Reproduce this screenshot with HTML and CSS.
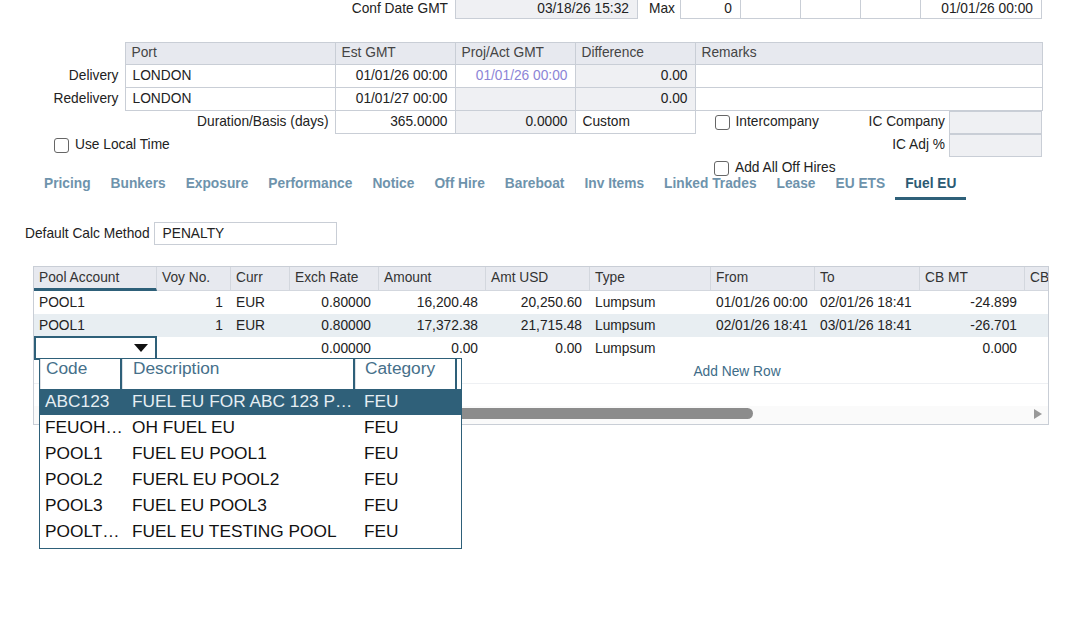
FILE: index.html
```html
<!DOCTYPE html>
<html lang="en">
<head>
    <meta charset="UTF-8">
    <meta name="viewport" content="width=device-width, initial-scale=1.0">
    <title>Fuel EU</title>
    <link rel="stylesheet" href="styles.css">
</head>
<body>
    <div class="top-row">
        <span class="top-label">Conf Date GMT</span>
        <span class="fld gray num w182">03/18/26 15:32</span>
        <span class="top-max">Max</span>
        <span class="fld num w61">0</span>
        <span class="fld w61"></span>
        <span class="fld w61"></span>
        <span class="fld w61"></span>
        <span class="fld num w122">01/01/26 00:00</span>
    </div>

    <table class="port-table">
        <colgroup>
            <col style="width:125px"><col style="width:210px"><col style="width:120px">
            <col style="width:120px"><col style="width:120px"><col style="width:347px">
        </colgroup>
        <tr class="head-row">
            <th class="lbl"></th>
            <th>Port</th>
            <th>Est GMT</th>
            <th>Proj/Act GMT</th>
            <th>Difference</th>
            <th>Remarks</th>
        </tr>
        <tr>
            <td class="lbl">Delivery</td>
            <td>LONDON</td>
            <td class="num">01/01/26 00:00</td>
            <td class="num purple">01/01/26 00:00</td>
            <td class="num gray">0.00</td>
            <td></td>
        </tr>
        <tr>
            <td class="lbl">Redelivery</td>
            <td>LONDON</td>
            <td class="num">01/01/27 00:00</td>
            <td class="gray"></td>
            <td class="num gray">0.00</td>
            <td></td>
        </tr>
        <tr>
            <td class="lbl" colspan="2">Duration/Basis (days)</td>
            <td class="num">365.0000</td>
            <td class="num gray">0.0000</td>
            <td>Custom</td>
            <td class="side">
                <div class="side-box">
                    <label class="chk"><span class="box"></span>Intercompany</label>
                    <span class="side-label">IC Company</span>
                    <span class="side-fld"></span>
                </div>
            </td>
        </tr>
        <tr>
            <td class="blank" colspan="5">
                <label class="chk local"><span class="box"></span>Use Local Time</label>
            </td>
            <td class="side">
                <div class="side-box">
                    <span class="side-label">IC Adj %</span>
                    <span class="side-fld"></span>
                </div>
            </td>
        </tr>
        <tr>
            <td class="blank" colspan="5"></td>
            <td class="side">
                <div class="side-box">
                    <label class="chk"><span class="box"></span>Add All Off Hires</label>
                </div>
            </td>
        </tr>
    </table>

    <div class="tabs">
        <span class="tab">Pricing</span>
        <span class="tab">Bunkers</span>
        <span class="tab">Exposure</span>
        <span class="tab">Performance</span>
        <span class="tab">Notice</span>
        <span class="tab">Off Hire</span>
        <span class="tab">Bareboat</span>
        <span class="tab">Inv Items</span>
        <span class="tab">Linked Trades</span>
        <span class="tab">Lease</span>
        <span class="tab">EU ETS</span>
        <span class="tab active">Fuel EU</span>
    </div>

    <div class="calc-row">
        <span>Default Calc Method</span>
        <span class="calc-fld">PENALTY</span>
    </div>

    <div class="grid-wrap">
        <div class="grid">
            <div class="grid-inner">
                <div class="cols head">
                    <div class="hc sorted">Pool Account</div>
                    <div class="hc">Voy No.</div>
                    <div class="hc">Curr</div>
                    <div class="hc">Exch Rate</div>
                    <div class="hc">Amount</div>
                    <div class="hc">Amt USD</div>
                    <div class="hc">Type</div>
                    <div class="hc">From</div>
                    <div class="hc">To</div>
                    <div class="hc">CB MT</div>
                    <div class="hc">CB</div>
                    <div class="hc"></div>
                </div>
                <div class="cols row">
                    <div>POOL1</div>
                    <div class="num">1</div>
                    <div>EUR</div>
                    <div class="num">0.80000</div>
                    <div class="num">16,200.48</div>
                    <div class="num">20,250.60</div>
                    <div>Lumpsum</div>
                    <div>01/01/26 00:00</div>
                    <div>02/01/26 18:41</div>
                    <div class="num">-24.899</div>
                    <div></div>
                    <div></div>
                </div>
                <div class="cols row alt">
                    <div>POOL1</div>
                    <div class="num">1</div>
                    <div>EUR</div>
                    <div class="num">0.80000</div>
                    <div class="num">17,372.38</div>
                    <div class="num">21,715.48</div>
                    <div>Lumpsum</div>
                    <div>02/01/26 18:41</div>
                    <div>03/01/26 18:41</div>
                    <div class="num">-26.701</div>
                    <div></div>
                    <div></div>
                </div>
                <div class="cols row">
                    <div class="editor">
                        <svg width="14" height="8" viewBox="0 0 14 8"><polygon points="0,0 14,0 7,8" fill="#111"/></svg>
                    </div>
                    <div></div>
                    <div></div>
                    <div class="num">0.00000</div>
                    <div class="num">0.00</div>
                    <div class="num">0.00</div>
                    <div>Lumpsum</div>
                    <div></div>
                    <div></div>
                    <div class="num">0.000</div>
                    <div></div>
                    <div></div>
                </div>
                <div class="add-row">Add New Row</div>
            </div>
            <div class="grid-fill"></div>
            <div class="scroll">
                <span class="thumb"></span>
                <span class="arrow"></span>
            </div>
        </div>

        <div class="dropdown">
            <div class="dd-head">
                <div class="dd-code">Code</div>
                <div class="dd-desc">Description</div>
                <div class="dd-cat">Category</div>
            </div>
            <div class="dd-row selected">
                <div class="dd-code">ABC123</div>
                <div class="dd-desc">FUEL EU FOR ABC 123 P…</div>
                <div class="dd-cat">FEU</div>
            </div>
            <div class="dd-row">
                <div class="dd-code">FEUOH…</div>
                <div class="dd-desc">OH FUEL EU</div>
                <div class="dd-cat">FEU</div>
            </div>
            <div class="dd-row">
                <div class="dd-code">POOL1</div>
                <div class="dd-desc">FUEL EU POOL1</div>
                <div class="dd-cat">FEU</div>
            </div>
            <div class="dd-row">
                <div class="dd-code">POOL2</div>
                <div class="dd-desc">FUERL EU POOL2</div>
                <div class="dd-cat">FEU</div>
            </div>
            <div class="dd-row">
                <div class="dd-code">POOL3</div>
                <div class="dd-desc">FUEL EU POOL3</div>
                <div class="dd-cat">FEU</div>
            </div>
            <div class="dd-row">
                <div class="dd-code">POOLT…</div>
                <div class="dd-desc">FUEL EU TESTING POOL</div>
                <div class="dd-cat">FEU</div>
            </div>
        </div>
    </div>
</body>
</html>
```

FILE: styles.css
```css
body {
    margin: 0;
    min-height: 626px;
    font-family: "Liberation Sans", Arial, sans-serif;
    font-size: 13.75px;
    color: #222;
    background-color: #fff;
}
.num {
    text-align: right;
}
.gray {
    background-color: #eff0f3;
}

/* top strip */
.top-row {
    display: flex;
    height: 21px;
    margin-top: -2px;
}
.top-label {
    width: 455px;
    text-align: right;
    padding-right: 7px;
    box-sizing: border-box;
    line-height: 21px;
}
.top-max {
    width: 43px;
    padding-left: 12px;
    box-sizing: border-box;
    line-height: 21px;
}
.fld {
    border: 1px solid #c9ced6;
    box-sizing: border-box;
    margin-right: -1px;
    padding: 0 8px;
    line-height: 19px;
    white-space: nowrap;
}
.w182 { width: 183px; }
.w61 { width: 61px; }
.w122 { width: 122px; }

/* port table */
.port-table {
    border-collapse: collapse;
    table-layout: fixed;
    width: 1042px;
    margin-top: 23px;
}
.port-table tr {
    height: 23px;
}
.port-table tr.head-row {
    height: 22px;
}
.port-table th,
.port-table td {
    border: 1px solid #c9ced6;
    padding: 0 7px;
    white-space: nowrap;
    overflow: hidden;
    line-height: 20px;
}
.port-table th {
    background-color: #e7e9ef;
    font-weight: normal;
    text-align: left;
    color: #444;
    padding-left: 6px;
    vertical-align: top;
}
.port-table .lbl {
    border: none;
    background: none;
    text-align: right;
    padding-right: 6px;
}
.port-table .blank,
.port-table .side {
    border: none;
    padding: 0;
}
.purple {
    color: #8c84d6;
}
.side-box {
    display: flex;
    align-items: center;
    height: 22px;
}
.side-label {
    margin-left: auto;
    padding-right: 4px;
}
.side-fld {
    width: 93px;
    height: 23px;
    box-sizing: border-box;
    border: 1px solid #c9ced6;
    background-color: #eff0f3;
}
.chk {
    display: flex;
    align-items: center;
    margin-left: 19px;
}
.chk.local {
    margin-left: 54px;
}
.box {
    width: 15px;
    height: 15px;
    box-sizing: border-box;
    border: 1px solid #666;
    border-radius: 3px;
    background-color: #fff;
    margin-right: 6px;
}

/* tabs */
.tabs {
    display: flex;
    padding-left: 34px;
    margin-top: -9px;
}
.tab {
    padding: 5px 10px 5px;
    line-height: 16px;
    font-weight: bold;
    color: #6e93ac;
    border-bottom: 3px solid transparent;
}
.tab.active {
    color: #2b5a73;
    border-bottom-color: #2e6079;
}

/* calc method */
.calc-row {
    display: flex;
    align-items: center;
    padding-left: 25px;
    margin-top: 22px;
}
.calc-fld {
    width: 183px;
    height: 23px;
    line-height: 21px;
    box-sizing: border-box;
    border: 1px solid #c9ced6;
    margin-left: 4px;
    padding-left: 8px;
}

/* grid */
.grid-wrap {
    position: relative;
    margin: 21px 0 0 33px;
    width: 1016px;
}
.grid {
    height: 159px;
    box-sizing: border-box;
    border: 1px solid #c9ced6;
    overflow: hidden;
    display: flex;
    flex-direction: column;
}
.grid-inner {
    width: 1406px;
}
.cols {
    display: grid;
    grid-template-columns: 123px 74px 59px 89px 107px 104px 121px 104px 105px 105px 100px 1fr;
}
.hc {
    height: 24px;
    box-sizing: border-box;
    line-height: 21px;
    padding-left: 5px;
    background-color: #e7e9ef;
    border-right: 1px solid #d3d7de;
    border-bottom: 1px solid #d3d7de;
    color: #333;
    white-space: nowrap;
}
.hc.sorted {
    border-bottom: 3px solid #2e6079;
}
.row {
    height: 23px;
    line-height: 23px;
}
.row > div {
    padding: 0 8px 0 5px;
    white-space: nowrap;
}
.row.alt {
    background-color: #e8eef2;
}
.row > .editor {
    height: 24px;
    margin-top: -1px;
    box-sizing: border-box;
    border: 2px solid #2e6079;
    display: flex;
    justify-content: flex-end;
    align-items: center;
    padding-right: 7px;
}
.add-row {
    height: 23px;
    line-height: 23px;
    text-align: center;
    color: #3d6c88;
    border-bottom: 1px solid #eef0f3;
}
.grid-fill {
    flex: 1;
}
.scroll {
    height: 16px;
    display: flex;
    align-items: center;
    padding: 0 6px 2px 11px;
    background-color: #fafafa;
}
.thumb {
    width: 708px;
    height: 11px;
    border-radius: 6px;
    background-color: #8c8c8c;
}
.arrow {
    margin-left: auto;
    width: 0;
    height: 0;
    border-left: 8px solid #999;
    border-top: 5px solid transparent;
    border-bottom: 5px solid transparent;
}

/* dropdown list */
.dropdown {
    position: absolute;
    left: 6px;
    top: 92px;
    width: 423px;
    height: 191px;
    box-sizing: border-box;
    border: 1px solid #2e6079;
    background-color: #fff;
    font-size: 17.3px;
}
.dd-head,
.dd-row {
    display: flex;
}
.dd-head {
    height: 30px;
}
.dd-head > div {
    box-sizing: border-box;
    border-right: 2px solid #2e6079;
    border-left: 1px solid #dde0e5;
    line-height: 18px;
    color: #46708a;
}
.dd-row {
    height: 26px;
    line-height: 25px;
    color: #111;
}
.dd-row.selected {
    background-color: #2f6079;
    color: #e6eef3;
}
.dd-code,
.dd-desc,
.dd-cat {
    box-sizing: border-box;
    white-space: nowrap;
    overflow: hidden;
}
.dd-code {
    width: 82px;
    padding-left: 5px;
}
.dd-desc {
    width: 233px;
    padding-left: 10px;
}
.dd-cat {
    width: 102px;
    padding-left: 9px;
}
```
